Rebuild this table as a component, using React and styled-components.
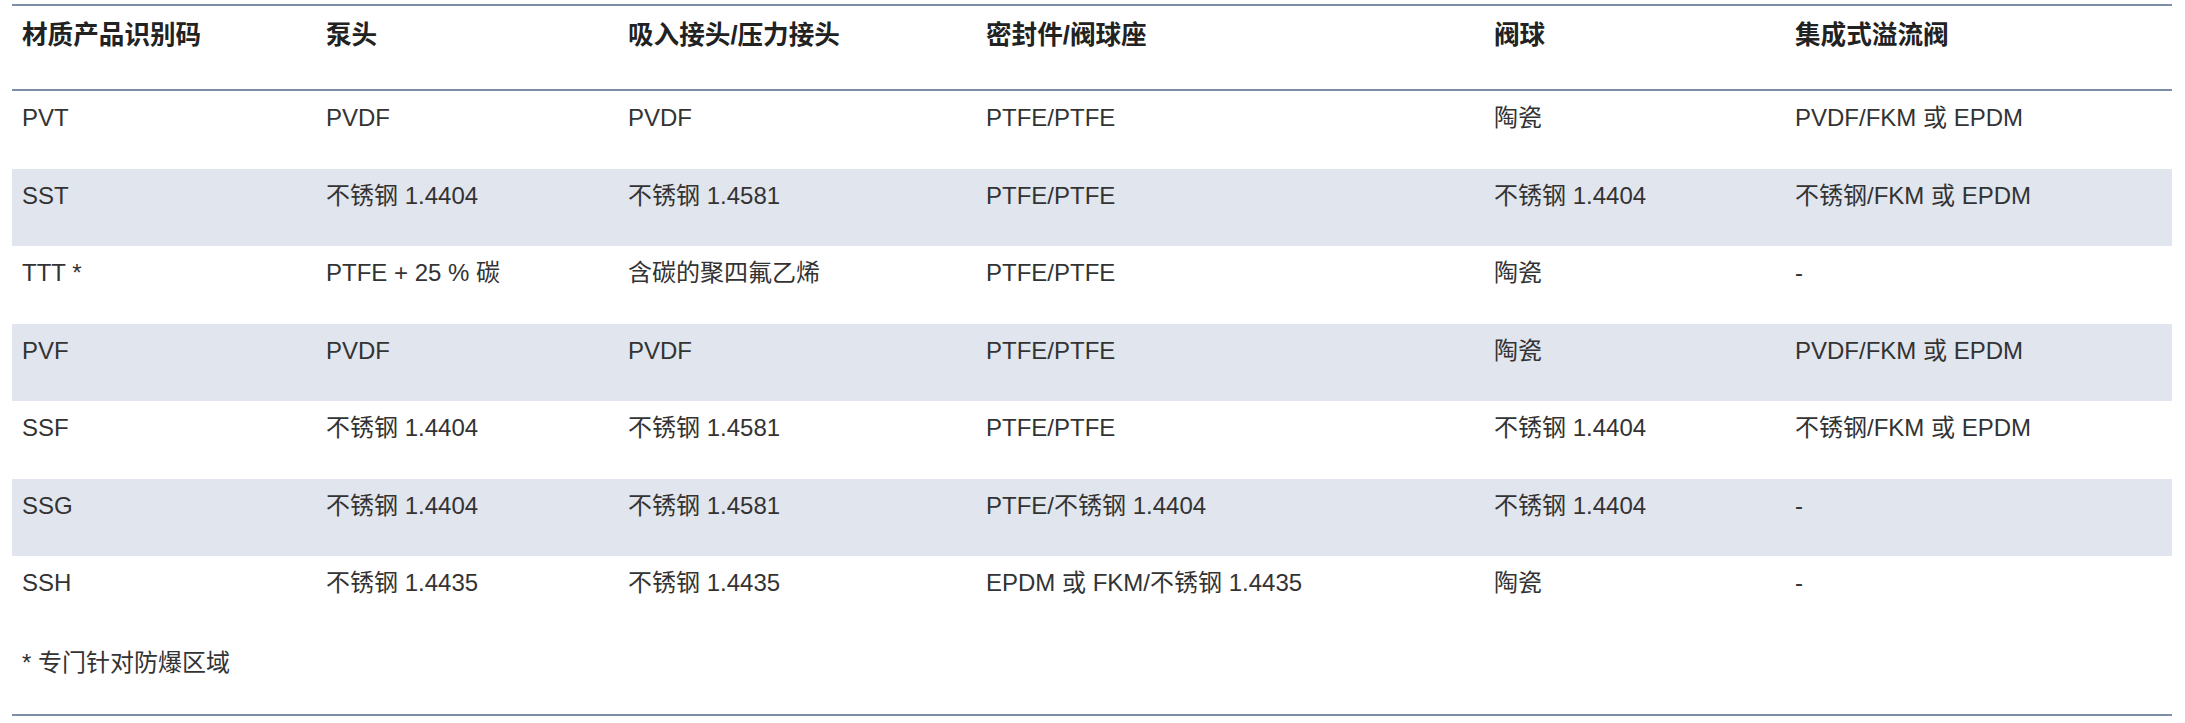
import styled, { createGlobalStyle } from "styled-components";

const GlobalStyle = createGlobalStyle`
  body {
    margin: 0;
    background: #ffffff;
    font-family: "Liberation Sans", "Noto Sans CJK SC", sans-serif;
    color: #333333;
  }
`;

const LINE = "#7d8da8";

const Page = styled.div`
  padding: 4px 13px 0 12px;
`;

const Section = styled.section`
  width: 2160px;
  border-top: 2px solid ${LINE};
  border-bottom: 2px solid ${LINE};
`;

const Table = styled.table`
  width: 100%;
  border-collapse: separate;
  border-spacing: 0;
  table-layout: fixed;
`;

const HeadCell = styled.th`
  box-sizing: border-box;
  width: ${(p) => p.$width}px;
  padding: 12px 10px 37px;
  line-height: 34px;
  font-size: 25.6px;
  font-weight: 700;
  color: #222222;
  text-align: left;
  vertical-align: top;
  border-bottom: 2px solid ${LINE};
`;

const Row = styled.tr`
  background: ${(p) => (p.$shaded ? "#e1e5ee" : "transparent")};
`;

const Cell = styled.td`
  height: 77.5px;
  box-sizing: border-box;
  padding: 10px 10px 0;
  line-height: 34px;
  font-size: 24px;
  vertical-align: top;
  white-space: nowrap;
`;

const Footnote = styled.p`
  margin: 0;
  padding: 12px 10px 34px;
  line-height: 34px;
  font-size: 24px;
`;

const columns = [
  { title: "材质产品识别码", width: 304 },
  { title: "泵头", width: 302 },
  { title: "吸入接头/压力接头", width: 358 },
  { title: "密封件/阀球座", width: 508 },
  { title: "阀球", width: 301 },
  { title: "集成式溢流阀", width: 387 },
];

const rows = [
  ["PVT", "PVDF", "PVDF", "PTFE/PTFE", "陶瓷", "PVDF/FKM 或 EPDM"],
  ["SST", "不锈钢 1.4404", "不锈钢 1.4581", "PTFE/PTFE", "不锈钢 1.4404", "不锈钢/FKM 或 EPDM"],
  ["TTT *", "PTFE + 25 % 碳", "含碳的聚四氟乙烯", "PTFE/PTFE", "陶瓷", "-"],
  ["PVF", "PVDF", "PVDF", "PTFE/PTFE", "陶瓷", "PVDF/FKM 或 EPDM"],
  ["SSF", "不锈钢 1.4404", "不锈钢 1.4581", "PTFE/PTFE", "不锈钢 1.4404", "不锈钢/FKM 或 EPDM"],
  ["SSG", "不锈钢 1.4404", "不锈钢 1.4581", "PTFE/不锈钢 1.4404", "不锈钢 1.4404", "-"],
  ["SSH", "不锈钢 1.4435", "不锈钢 1.4435", "EPDM 或 FKM/不锈钢 1.4435", "陶瓷", "-"],
];

export default function App() {
  return (
    <Page>
      <GlobalStyle />
      <Section>
        <Table>
          <thead>
            <tr>
              {columns.map((c) => (
                <HeadCell key={c.title} $width={c.width}>
                  {c.title}
                </HeadCell>
              ))}
            </tr>
          </thead>
          <tbody>
            {rows.map((r, i) => (
              <Row key={r[0]} $shaded={i % 2 === 1}>
                {r.map((v, j) => (
                  <Cell key={j}>{v}</Cell>
                ))}
              </Row>
            ))}
          </tbody>
        </Table>
        <Footnote>* 专门针对防爆区域</Footnote>
      </Section>
    </Page>
  );
}
